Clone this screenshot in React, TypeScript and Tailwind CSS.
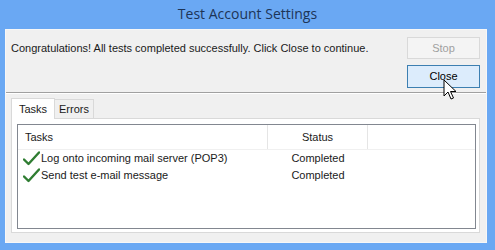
function Check() {
  return (
    <svg width="17" height="15" viewBox="0 0 17 15" className="shrink-0">
      <path d="M1 8.5 L5.5 13 L16 1.5" fill="none" stroke="#2f7d32" strokeWidth="2.4" strokeLinecap="round" strokeLinejoin="round" />
    </svg>
  );
}

function Cursor() {
  return (
    <svg width="14" height="22" viewBox="0 0 14 22" className="absolute left-[437px] top-[49px]">
      <path d="M1 1 L1 17 L5 13 L8 20 L10.5 19 L7.5 12.5 L13 12.5 Z" fill="#fff" stroke="#000" strokeWidth="1" strokeLinejoin="round" />
    </svg>
  );
}

const rows = [
  { task: "Log onto incoming mail server (POP3)", status: "Completed" },
  { task: "Send test e-mail message", status: "Completed" },
];

export default function App() {
  return (
    <div className="flex h-[250px] w-[495px] flex-col bg-[#6aa8f3] font-['Liberation_Sans',sans-serif] text-[11px] text-[#1a1a1a]">
      <div className="flex h-[29px] items-center justify-center pb-[2px] font-['Open_Sans',sans-serif] text-[14px] text-[#1d3557]">
        Test Account Settings
      </div>
      <div className="relative ml-[5px] mr-[8px] flex h-[214px] flex-col border border-[#f7f7f7] bg-[#f0f0f0]">
        <div className="flex h-[63px] border-b border-[#a0a0a0]">
          <p className="flex-1 pl-[5px] pt-[10px]">
            Congratulations! All tests completed successfully. Click Close to continue.
          </p>
          <div className="mr-[6px] flex w-[73px] flex-col gap-[6px] pt-[7px]">
            <button className="h-[22px] border border-[#d9d9d9] bg-[#f4f4f4] text-[#a0a0a0]">Stop</button>
            <button className="h-[23px] border border-[#3c7fb1] bg-[#dcecfc] text-black">Close</button>
          </div>
          <Cursor />
        </div>
        <div className="border-t border-white px-[5px] pt-[4px]">
          <div className="flex items-end">
            <div className="relative z-10 -mb-px flex h-[21px] w-[44px] items-center justify-center border border-b-0 border-[#d9d9d9] bg-white">
              Tasks
            </div>
            <div className="flex h-[19px] w-[39px] items-center justify-center border border-b-0 border-l-0 border-[#d9d9d9] bg-[#f0f0f0]">
              Errors
            </div>
          </div>
          <div className="h-[115px] w-[469px] border border-[#d9d9d9] bg-white px-[5px] pt-[5px]">
            <div className="h-[105px] w-[459px] border border-[#828790] bg-white">
              <div className="flex h-[25px] border-b border-[#f0f0f0]">
                <div className="flex w-[250px] items-center border-r border-[#e5e5e5] pl-[7px]">Tasks</div>
                <div className="flex w-[100px] items-center justify-center border-r border-[#e5e5e5]">Status</div>
              </div>
              {rows.map((r) => (
                <div key={r.task} className="flex h-[17px] items-center">
                  <div className="flex w-[250px] items-center gap-[1px] pl-[5px]">
                    <Check />
                    <span>{r.task}</span>
                  </div>
                  <div className="w-[100px] text-center">{r.status}</div>
                </div>
              ))}
            </div>
          </div>
        </div>
      </div>
    </div>
  );
}
